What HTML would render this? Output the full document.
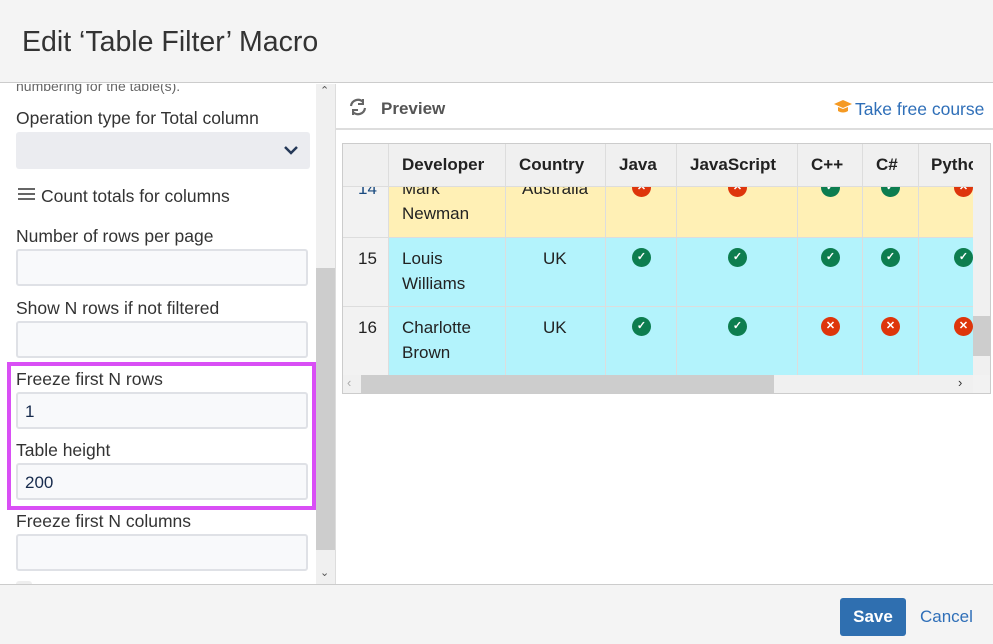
<!DOCTYPE html>
<html><head><style>
*{box-sizing:border-box;margin:0;padding:0}
body{width:993px;height:644px;overflow:hidden;font-family:"Liberation Sans",sans-serif;background:#fff;position:relative;color:#172b4d}
.a{position:absolute}
.lbl{position:absolute;left:16px;font-size:17.5px;color:#333}
.inp{position:absolute;left:16px;width:292px;height:37px;background:#f8f9fb;border:2px solid #dfe1e6;border-radius:3px;font-size:17px;padding:8px 7px;color:#172b4d}
.c{position:absolute;font-size:17px;color:#222}
.ok,.no{position:absolute;width:19px;height:19px;border-radius:50%;color:#fff;font-size:11px;font-weight:bold;text-align:center;line-height:19px}
.ok{background:#0d7d4f}.no{background:#de350b}
</style></head><body>
<div class="a" style="left:0;top:0;width:993px;height:83px;background:#f4f4f4;border-bottom:1px solid #ccc"></div>
<div class="a" style="left:22px;top:26px;font-size:28.5px;color:#333">Edit ‘Table Filter’ Macro</div>

<!-- left panel -->
<div class="a" style="left:0;top:84px;width:316px;height:500px;overflow:hidden">
<div class="lbl" style="top:-6px;font-size:14px;color:#666">numbering for the table(s).</div>
<div class="lbl" style="top:24px">Operation type for Total column</div>
<div class="a" style="left:16px;top:48px;width:294px;height:37px;background:#ebecf0;border-radius:3px"></div>
<svg class="a" style="left:283px;top:60px" width="16" height="12"><path d="M2 3l6 6 6-6" stroke="#253858" stroke-width="2.5" fill="none"/></svg>
<div class="a" style="left:18px;top:104px;width:17px;height:2px;background:#666;box-shadow:0 5px #666,0 10px #666"></div>
<div class="lbl" style="left:41px;top:102px">Count totals for columns</div>
<div class="lbl" style="top:142px">Number of rows per page</div>
<div class="inp" style="top:165px"></div>
<div class="lbl" style="top:214px">Show N rows if not filtered</div>
<div class="inp" style="top:237px"></div>
<div class="lbl" style="top:285px">Freeze first N rows</div>
<div class="inp" style="top:308px">1</div>
<div class="lbl" style="top:356px">Table height</div>
<div class="inp" style="top:379px">200</div>
<div class="lbl" style="top:427px">Freeze first N columns</div>
<div class="inp" style="top:450px"></div>
<div class="a" style="left:16px;top:497px;width:16px;height:16px;border-radius:3px;background:#eee"></div>
</div>
<div class="a" style="left:7px;top:362px;width:309px;height:148px;border:4px solid #d94ff5"></div>
<!-- left scrollbar -->
<div class="a" style="left:316px;top:84px;width:20px;height:500px;background:#f0f0f0"></div>
<div class="a" style="left:316px;top:268px;width:20px;height:282px;background:#cdcdcd"></div>
<div class="a" style="left:320px;top:84px;font-size:11px;color:#555">&#8963;</div>
<div class="a" style="left:320px;top:566px;font-size:11px;color:#555">&#8964;</div>
<div class="a" style="left:335px;top:84px;width:1px;height:500px;background:#ddd"></div>

<!-- right panel -->
<svg class="a" style="left:348px;top:97px" width="20" height="20"><path d="M15 5A7 7 0 0 0 3 9M5 15A7 7 0 0 0 17 11" stroke="#666" stroke-width="2.2" fill="none"/><path d="M15 2v5h-5" stroke="#666" stroke-width="2" fill="none"/><path d="M5 18v-5h5" stroke="#666" stroke-width="2" fill="none"/></svg>
<div class="a" style="left:381px;top:99px;font-size:17px;font-weight:bold;color:#555">Preview</div>
<svg class="a" style="left:833px;top:99px" width="20" height="16"><path d="M1 5l9-4 9 4-9 4z" fill="#f59a23"/><path d="M5 8v4c3 2 7 2 10 0V8l-5 2z" fill="#f59a23"/></svg>
<div class="a" style="left:855px;top:99px;font-size:17.5px;color:#2f6fb8">Take free course</div>
<div class="a" style="left:336px;top:128px;width:657px;height:2px;background:#ddd"></div>

<div class="a" style="left:342px;top:143px;width:649px;height:251px;border:1px solid #ccc;background:#f2f2f2;overflow:hidden">
 <div class="a" style="left:45px;top:43px;width:585px;height:50px;background:#fff0b5"></div>
 <div class="a" style="left:45px;top:93px;width:585px;height:138px;background:#b3f3fc"></div>
 <div class="a" style="left:0;top:0;width:630px;height:43px;background:#f0f0f0;border-bottom:1px solid #ddd"></div>
 <div class="a" style="left:45px;top:0;width:1px;height:231px;background:#ddd"></div>
 <div class="a" style="left:162px;top:0;width:1px;height:231px;background:#ddd"></div>
 <div class="a" style="left:262px;top:0;width:1px;height:231px;background:#ddd"></div>
 <div class="a" style="left:333px;top:0;width:1px;height:231px;background:#ddd"></div>
 <div class="a" style="left:454px;top:0;width:1px;height:231px;background:#ddd"></div>
 <div class="a" style="left:519px;top:0;width:1px;height:231px;background:#ddd"></div>
 <div class="a" style="left:575px;top:0;width:1px;height:231px;background:#ddd"></div>
 <div class="a" style="left:0;top:93px;width:630px;height:1px;background:#ddd"></div>
 <div class="a" style="left:0;top:162px;width:630px;height:1px;background:#ddd"></div>
 <div class="c" style="left:59px;top:11px;font-weight:bold">Developer</div>
 <div class="c" style="left:176px;top:11px;font-weight:bold">Country</div>
 <div class="c" style="left:276px;top:11px;font-weight:bold">Java</div>
 <div class="c" style="left:347px;top:11px;font-weight:bold">JavaScript</div>
 <div class="c" style="left:468px;top:11px;font-weight:bold">C++</div>
 <div class="c" style="left:533px;top:11px;font-weight:bold">C#</div>
 <div class="c" style="left:588px;top:11px;font-weight:bold">Pytho</div>
 <div class="a" style="left:0;top:43px;width:630px;height:188px;overflow:hidden">
  <div class="c" style="left:15px;top:-8px;color:#1a4b80">14</div>
  <div class="c" style="left:59px;top:-11px;line-height:25px">Mark<br>Newman</div>
  <div class="c" style="left:179px;top:-8px">Australia</div>
  <div class="no" style="left:289px;top:-9px">✕</div><div class="no" style="left:385px;top:-9px">✕</div>
  <div class="ok" style="left:478px;top:-9px">✓</div><div class="ok" style="left:538px;top:-9px">✓</div><div class="no" style="left:611px;top:-9px">✕</div>
  <div class="c" style="left:15px;top:62px">15</div>
  <div class="c" style="left:59px;top:59px;line-height:25px">Louis<br>Williams</div>
  <div class="c" style="left:200px;top:62px">UK</div>
  <div class="ok" style="left:289px;top:61px">✓</div><div class="ok" style="left:385px;top:61px">✓</div>
  <div class="ok" style="left:478px;top:61px">✓</div><div class="ok" style="left:538px;top:61px">✓</div><div class="ok" style="left:611px;top:61px">✓</div>
  <div class="c" style="left:15px;top:131px">16</div>
  <div class="c" style="left:59px;top:128px;line-height:25px">Charlotte<br>Brown</div>
  <div class="c" style="left:200px;top:131px">UK</div>
  <div class="ok" style="left:289px;top:130px">✓</div><div class="ok" style="left:385px;top:130px">✓</div>
  <div class="no" style="left:478px;top:130px">✕</div><div class="no" style="left:538px;top:130px">✕</div><div class="no" style="left:611px;top:130px">✕</div>
 </div>
 <div class="a" style="left:630px;top:0;width:18px;height:231px;background:#f0f0f0"></div>
 <div class="a" style="left:630px;top:172px;width:18px;height:40px;background:#cdcdcd"></div>
 <div class="a" style="left:0;top:231px;width:630px;height:18px;background:#f0f0f0"></div>
 <div class="a" style="left:18px;top:231px;width:413px;height:18px;background:#cdcdcd"></div>
 <div class="a" style="left:615px;top:231px;font-size:13px;color:#333">›</div>
 <div class="a" style="left:4px;top:231px;font-size:13px;color:#aaa">‹</div>
</div>

<!-- footer -->
<div class="a" style="left:0;top:584px;width:993px;height:60px;background:#f4f4f4;border-top:1px solid #ccc"></div>
<div class="a" style="left:840px;top:598px;width:66px;height:38px;background:#2f6fb0;border-radius:3px;color:#fff;font-weight:bold;font-size:17px;text-align:center;line-height:38px">Save</div>
<div class="a" style="left:920px;top:607px;font-size:17px;color:#2f6fb8">Cancel</div>
</body></html>
